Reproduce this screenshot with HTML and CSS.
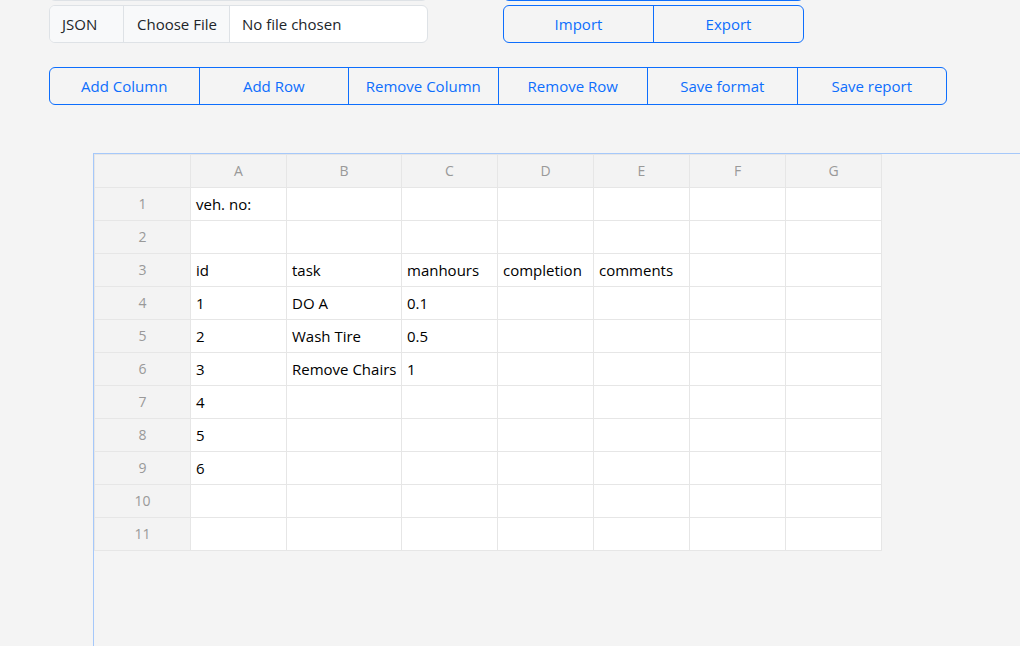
FILE: index.html
```html
<!DOCTYPE html>
<html lang="en">
<head>
<meta charset="utf-8">
<title>Report sheet</title>
<link rel="stylesheet" href="styles.css">
</head>
<body>
<div class="page">
  <div class="ctrl-row prev-row" aria-hidden="true">
    <div class="input-group"></div>
    <div class="btn-group"></div>
  </div>

  <div class="ctrl-row">
    <div class="input-group">
      <span class="ig-label">JSON</span>
      <span class="ig-file">Choose File</span>
      <span class="ig-name">No file chosen</span>
    </div>
    <div class="btn-group">
      <button class="btn">Import</button>
      <button class="btn">Export</button>
    </div>
  </div>

  <div class="toolbar">
    <button class="btn">Add Column</button>
    <button class="btn">Add Row</button>
    <button class="btn">Remove Column</button>
    <button class="btn">Remove Row</button>
    <button class="btn">Save format</button>
    <button class="btn">Save report</button>
  </div>

  <div class="sheet-wrap">
    <div class="sheet">
      <div class="hd corner"></div>
      <div class="hd">A</div><div class="hd">B</div><div class="hd">C</div><div class="hd">D</div><div class="hd">E</div><div class="hd">F</div><div class="hd">G</div>

      <div class="rn">1</div><div class="c">veh. no:</div><div class="c"></div><div class="c"></div><div class="c"></div><div class="c"></div><div class="c"></div><div class="c"></div>
      <div class="rn">2</div><div class="c"></div><div class="c"></div><div class="c"></div><div class="c"></div><div class="c"></div><div class="c"></div><div class="c"></div>
      <div class="rn">3</div><div class="c">id</div><div class="c">task</div><div class="c">manhours</div><div class="c">completion</div><div class="c">comments</div><div class="c"></div><div class="c"></div>
      <div class="rn">4</div><div class="c">1</div><div class="c">DO A</div><div class="c">0.1</div><div class="c"></div><div class="c"></div><div class="c"></div><div class="c"></div>
      <div class="rn">5</div><div class="c">2</div><div class="c">Wash Tire</div><div class="c">0.5</div><div class="c"></div><div class="c"></div><div class="c"></div><div class="c"></div>
      <div class="rn">6</div><div class="c">3</div><div class="c">Remove Chairs</div><div class="c">1</div><div class="c"></div><div class="c"></div><div class="c"></div><div class="c"></div>
      <div class="rn">7</div><div class="c">4</div><div class="c"></div><div class="c"></div><div class="c"></div><div class="c"></div><div class="c"></div><div class="c"></div>
      <div class="rn">8</div><div class="c">5</div><div class="c"></div><div class="c"></div><div class="c"></div><div class="c"></div><div class="c"></div><div class="c"></div>
      <div class="rn">9</div><div class="c">6</div><div class="c"></div><div class="c"></div><div class="c"></div><div class="c"></div><div class="c"></div><div class="c"></div>
      <div class="rn">10</div><div class="c"></div><div class="c"></div><div class="c"></div><div class="c"></div><div class="c"></div><div class="c"></div><div class="c"></div>
      <div class="rn">11</div><div class="c"></div><div class="c"></div><div class="c"></div><div class="c"></div><div class="c"></div><div class="c"></div><div class="c"></div>
    </div>
  </div>
</div>
</body>
</html>
```

FILE: styles.css
```css
* { box-sizing: border-box; }

html, body {
  margin: 0;
  height: 100%;
  background: #f4f4f4;
  overflow: hidden;
}

body {
  font-family: "Open Sans", "Liberation Sans", sans-serif;
  color: #212529;
}

.page {
  display: flex;
  flex-direction: column;
  padding-left: 49px;
  height: 100%;
}

.ctrl-row {
  display: flex;
  gap: 75px;
  margin-top: 4px;
  height: 38px;
}

.prev-row {
  margin-top: -37px;
  flex: none;
}

.input-group {
  display: flex;
  width: 379px;
  height: 38px;
  border: 1px solid #dee2e6;
  border-radius: 6px;
  background: #fff;
  overflow: hidden;
  font-size: 15px;
  line-height: 36px;
}

.ig-label,
.ig-file {
  background: #f8f9fa;
  padding: 0 0 0 12px;
  border-right: 1px solid #dee2e6;
  flex: none;
}

.ig-label { width: 74px; }
.ig-file { width: 106px; padding-left: 13px; }

.ig-name {
  padding: 0 12px;
}

.btn-group {
  display: flex;
  width: 301px;
  height: 38px;
  border: 1px solid #0d6efd;
  border-radius: 6px;
  overflow: hidden;
}

.btn {
  flex: 1;
  margin: 0;
  padding: 0;
  border: 0;
  background: transparent;
  color: #0d6efd;
  font-family: inherit;
  font-size: 15px;
  line-height: 36px;
}

.btn + .btn {
  border-left: 1px solid #0d6efd;
}

.toolbar {
  display: flex;
  width: 898px;
  height: 38px;
  margin-top: 24px;
  border: 1px solid #0d6efd;
  border-radius: 6px;
  overflow: hidden;
  flex: none;
}

.sheet-wrap {
  margin-top: 48px;
  margin-left: 44px;
  flex: 1;
  border-top: 1px solid #a5c8fa;
  border-left: 1px solid #a5c8fa;
}

.sheet {
  display: grid;
  grid-template-columns: 96px 96px 115px 96px 96px 96px 96px 96px;
  grid-auto-rows: 33px;
  width: max-content;
  border-top: 1px solid #e6e6e6;
  border-left: 1px solid #e6e6e6;
  font-size: 15px;
}

.sheet > div {
  border-right: 1px solid #e6e6e6;
  border-bottom: 1px solid #e6e6e6;
  white-space: nowrap;
  overflow: hidden;
  line-height: 32px;
}

.hd,
.rn {
  background: #f3f3f3;
  color: #999;
  text-align: center;
  font-size: 14px;
}

.c {
  background: #fff;
  color: #000;
  padding-left: 5px;
}
```
